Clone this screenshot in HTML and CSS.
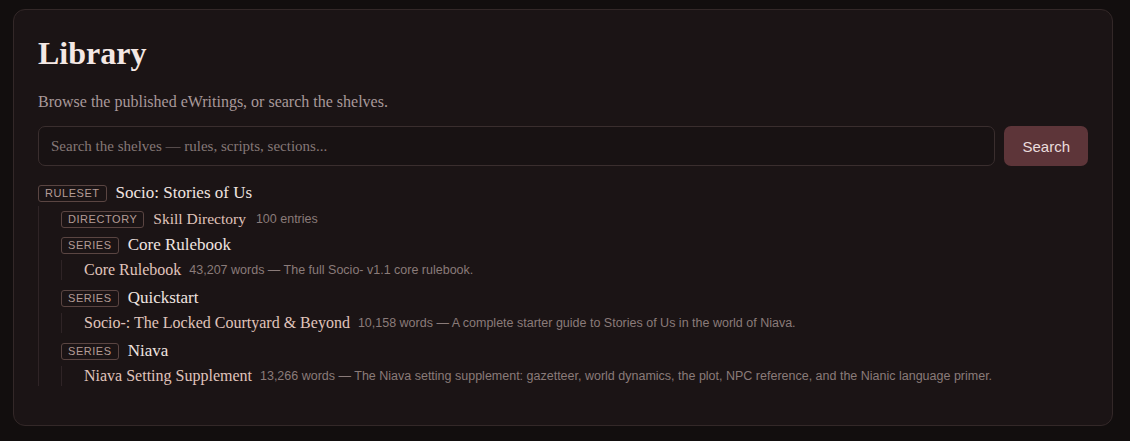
FILE: index.html
```html
<!DOCTYPE html>
<html>
<head>
	<meta charset="utf-8">
	<title>Library</title>
	<link rel="stylesheet" href="styles.css">
</head>
<body>
	<main class="card">
		<h1>Library</h1>
		<p class="lede">Browse the published eWritings, or search the shelves.</p>

		<form class="search" onsubmit="return false">
			<input type="text" placeholder="Search the shelves — rules, scripts, sections...">
			<button type="submit">Search</button>
		</form>

		<ul class="tree">
			<li>
				<div class="node"><span class="tag">Ruleset</span><span class="name">Socio: Stories of Us</span></div>
				<ul class="branch">
					<li>
						<div class="node"><span class="tag">Directory</span><a class="dir" href="#">Skill Directory</a><span class="meta">100 entries</span></div>
					</li>
					<li>
						<div class="node"><span class="tag">Series</span><span class="name">Core Rulebook</span></div>
						<ul class="docs">
							<li><a href="#">Core Rulebook</a><span class="meta">43,207 words — The full Socio- v1.1 core rulebook.</span></li>
						</ul>
					</li>
					<li>
						<div class="node"><span class="tag">Series</span><span class="name">Quickstart</span></div>
						<ul class="docs">
							<li><a href="#">Socio-: The Locked Courtyard &amp; Beyond</a><span class="meta">10,158 words — A complete starter guide to Stories of Us in the world of Niava.</span></li>
						</ul>
					</li>
					<li>
						<div class="node"><span class="tag">Series</span><span class="name">Niava</span></div>
						<ul class="docs">
							<li><a href="#">Niava Setting Supplement</a><span class="meta">13,266 words — The Niava setting supplement: gazetteer, world dynamics, the plot, NPC reference, and the Nianic language primer.</span></li>
						</ul>
					</li>
				</ul>
			</li>
		</ul>
	</main>
</body>
</html>
```

FILE: styles.css
```css
body
{
	margin: 0;
	padding: 9px 17px 16px 13px;
	background: #120e0e;
	font-family: "Liberation Serif", "Times New Roman", serif;
	color: #e6dad6;
}

.card
{
	background: #1b1415;
	border: 1px solid #332828;
	border-radius: 12px;
	padding: 24px 24px 24px 24px;
}

h1
{
	margin: 0 0 18px;
	font-size: 32px;
	line-height: 38px;
	font-weight: bold;
	color: #f4e8e4;
}

.lede
{
	margin: 0 0 12px;
	font-size: 16px;
	line-height: 24px;
	color: #a8999a;
}

.search
{
	display: flex;
	gap: 9px;
	margin: 0 0 14px;
}

.search input
{
	flex: 1;
	height: 40px;
	box-sizing: border-box;
	padding: 0 12px;
	background: #181213;
	border: 1px solid #3a2e2e;
	border-radius: 7px;
	font-family: "Liberation Serif", serif;
	font-size: 15px;
	color: #e6dad6;
	outline: none;
}

.search input::placeholder
{
	color: #857877;
}

.search button
{
	height: 40px;
	padding: 0 18px;
	background: #5d3539;
	border: none;
	border-radius: 7px;
	font-family: "Liberation Sans", Arial, sans-serif;
	font-size: 15px;
	color: #eadcdc;
}

ul
{
	list-style: none;
	margin: 0;
	padding: 0;
}

.tree
{
	margin-bottom: 15px;
}

.node
{
	display: flex;
	align-items: center;
	height: 26px;
}

.tag
{
	border: 1px solid #5a4542;
	border-radius: 3px;
	padding: 0 6px;
	margin-right: 9px;
	font-family: "Liberation Sans", Arial, sans-serif;
	font-size: 11px;
	line-height: 15px;
	letter-spacing: 0.05em;
	text-transform: uppercase;
	color: #b49c96;
}

.name
{
	font-size: 17px;
	color: #f0e4e0;
}

a
{
	color: #e0c4bc;
	text-decoration: none;
	font-size: 16px;
}

a.dir
{
	font-size: 15.5px;
}

.meta
{
	margin-left: 8px;
	font-family: "Liberation Sans", Arial, sans-serif;
	font-size: 12.5px;
	color: #8a7b79;
}

a.dir + .meta
{
	margin-left: 10px;
}

.branch
{
	border-left: 1px solid #2f2426;
	padding-left: 22px;
}

.docs
{
	border-left: 1px solid #2f2426;
	padding-left: 22px;
	margin: 2px 0 5px;
}

.docs li
{
	display: flex;
	align-items: center;
	height: 20px;
}
```
